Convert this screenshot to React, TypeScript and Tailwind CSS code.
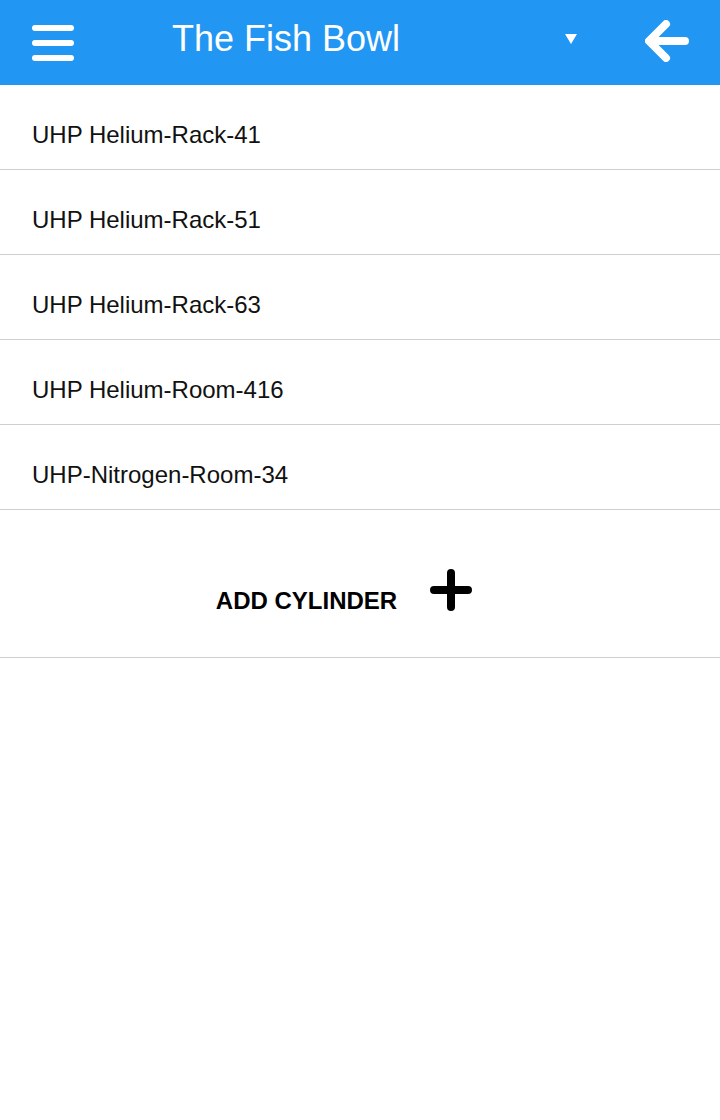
const cylinders = [
  'UHP Helium-Rack-41',
  'UHP Helium-Rack-51',
  'UHP Helium-Rack-63',
  'UHP Helium-Room-416',
  'UHP-Nitrogen-Room-34',
]

function Header() {
  return (
    <div className="h-[85px] bg-[#2196f3] flex items-center text-white">
      <button className="ml-[32px] w-[42px] h-[38px] flex flex-col justify-between py-[1px]">
        <span className="block h-[6px] w-full rounded-[3px] bg-white" />
        <span className="block h-[6px] w-full rounded-[3px] bg-white" />
        <span className="block h-[6px] w-full rounded-[3px] bg-white" />
      </button>
      <div className="ml-[98px] text-[36px] leading-[40px] mb-[8px]">The Fish Bowl</div>
      <svg className="ml-auto mr-[68px] mb-[8px]" width="12" height="10" viewBox="0 0 12 10">
        <polygon points="0,0 12,0 6,10" fill="white" />
      </svg>
      <svg className="mr-[31px] mb-[4px]" width="44" height="42" viewBox="0 0 44 42">
        <path
          d="M40 21H6M21 4L4 21L21 38"
          fill="none"
          stroke="white"
          strokeWidth="8"
          strokeLinecap="round"
          strokeLinejoin="round"
        />
      </svg>
    </div>
  )
}

export default function App() {
  return (
    <div className="w-[720px] h-[1120px] bg-white font-['Liberation_Sans',Arial,sans-serif] text-[#111]">
      <Header />
      <ul>
        {cylinders.map((name) => (
          <li
            key={name}
            className="pl-[32px] pt-[36px] pb-[20px] text-[24px] leading-[28px] border-b border-[#cfcfcf]"
          >
            {name}
          </li>
        ))}
      </ul>
      <div className="h-[148px] border-b border-[#cfcfcf] flex items-start justify-center pt-[59px] pr-[32px]">
        <span className="mt-[18px] text-[24px] leading-[28px] font-bold text-black">ADD CYLINDER</span>
        <svg className="ml-[33px]" width="42" height="42" viewBox="0 0 42 42">
          <path
            d="M21 4V38M4 21H38"
            fill="none"
            stroke="black"
            strokeWidth="8"
            strokeLinecap="round"
          />
        </svg>
      </div>
    </div>
  )
}
